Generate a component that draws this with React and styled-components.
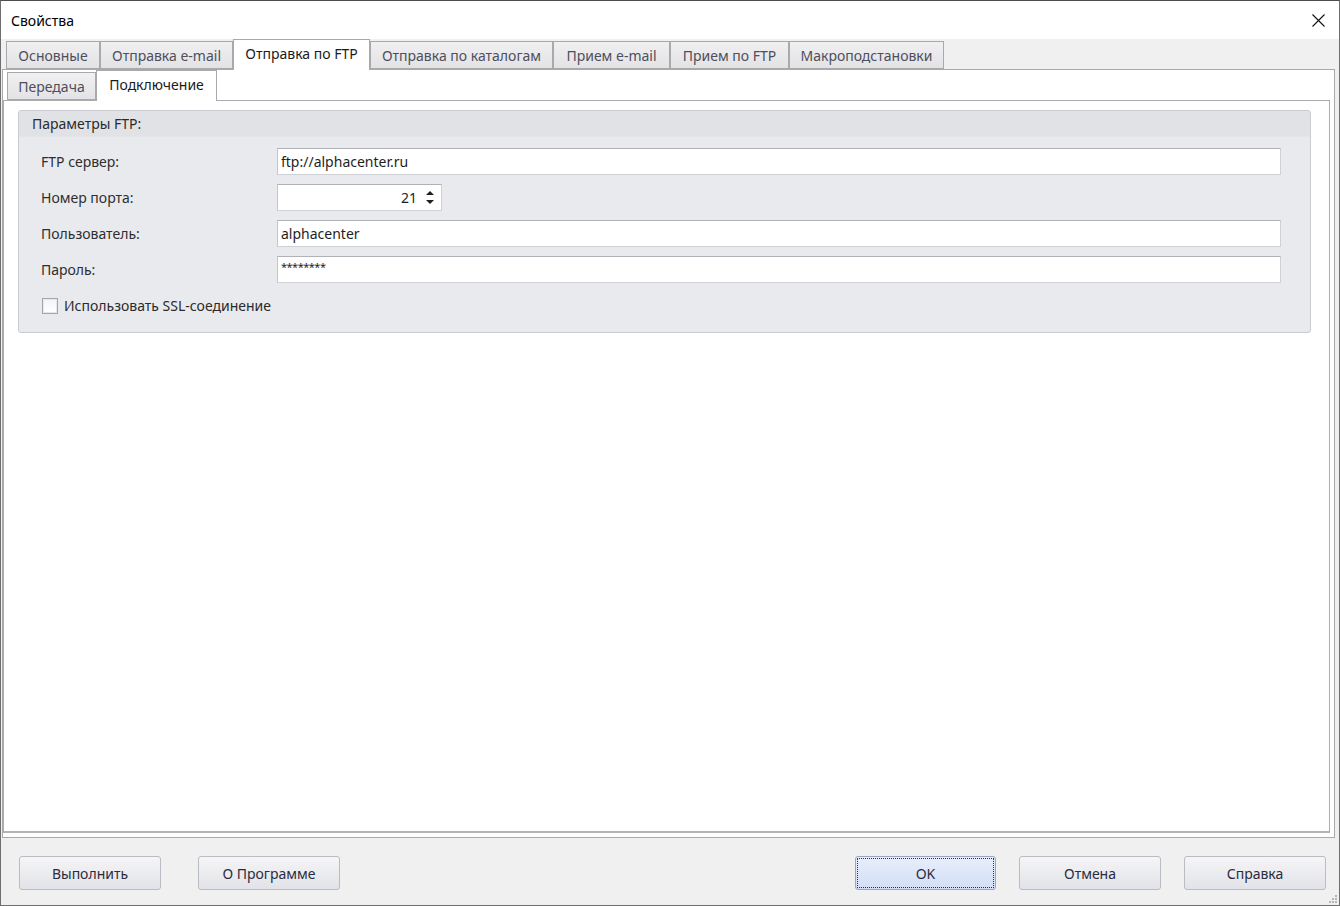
import styled, { createGlobalStyle } from "styled-components";

const GlobalStyle = createGlobalStyle`
  html, body {
    margin: 0;
    padding: 0;
    background: #ffffff;
  }
  * {
    box-sizing: border-box;
  }
`;

const Window = styled.div`
  width: 1340px;
  height: 906px;
  display: flex;
  flex-direction: column;
  border: 1px solid #6e6e6e;
  border-top-color: #4c4c4c;
  background: #f0f0f0;
  font-family: "Noto Sans", "Open Sans", sans-serif;
  font-size: 14px;
  color: #222;
  overflow: hidden;
`;

const TitleBar = styled.div`
  height: 38px;
  flex-shrink: 0;
  display: flex;
  align-items: center;
  justify-content: space-between;
  padding: 0 14px 0 10px;
  background: #ffffff;
  color: #000;
`;

const CloseButton = styled.button`
  width: 14px;
  height: 14px;
  padding: 0;
  border: 0;
  background: none;
  display: flex;
  align-items: center;
  justify-content: center;
`;

const TabStrip = styled.div`
  height: 30px;
  flex-shrink: 0;
  display: flex;
  align-items: flex-end;
  padding-left: ${(p) => p.$indent}px;
`;

const Tab = styled.div`
  position: relative;
  width: ${(p) => p.$width}px;
  height: ${(p) => (p.$active ? 31 : 28)}px;
  margin-bottom: ${(p) => (p.$active ? -1 : 0)}px;
  z-index: ${(p) => (p.$active ? 1 : 0)};
  display: flex;
  align-items: center;
  justify-content: center;
  padding-bottom: ${(p) => (p.$active ? 3 : 0)}px;
  border: 1px solid #a9a9ab;
  border-bottom: ${(p) => (p.$active ? "0" : "1px solid #a9a9ab")};
  background: ${(p) =>
    p.$active ? "#ffffff" : "linear-gradient(#f0f0f1, #e3e3e5)"};
  color: ${(p) => (p.$active ? "#1b1b1b" : "#4e4e5c")};
  white-space: nowrap;
`;

const TabPage = styled.div`
  flex: 1;
  display: flex;
  flex-direction: column;
  margin: 0 4px 0 1px;
  border: 1px solid #a9a9ab;
  background: #ffffff;
  min-height: 0;
`;

const InnerPage = styled.div`
  flex: 1;
  margin: 0 4px 4px 0;
  padding: 9px 18px 0 14px;
  border: 1px solid #acacae;
  border-bottom: 2px solid #b4b4b6;
  background: #ffffff;
`;

const GroupBox = styled.section`
  border: 1px solid #c9cbd0;
  border-radius: 3px;
  background: #e9eaee;
  overflow: hidden;
`;

const GroupHeader = styled.div`
  height: 26px;
  display: flex;
  align-items: center;
  padding-left: 13px;
  background: #e1e2e6;
  border-bottom: 1px solid #e4e5e9;
  color: #2a2a2a;
`;

const FieldGrid = styled.div`
  display: grid;
  grid-template-columns: 236px 1fr;
  row-gap: 9px;
  align-items: center;
  padding: 11px 29px 0 22px;
`;

const Label = styled.label`
  color: #2e2e2e;
`;

const Input = styled.div`
  height: 27px;
  width: ${(p) => (p.$width ? `${p.$width}px` : "100%")};
  display: flex;
  align-items: ${(p) => (p.$masked ? "flex-start" : "center")};
  justify-content: ${(p) => (p.$align === "right" ? "flex-end" : "flex-start")};
  padding: ${(p) => (p.$masked ? "2px 3px 0" : "0 3px")};
  border: 1px solid #d0d1d5;
  border-top-color: #b0b2b7;
  border-left-color: #c4c5ca;
  background: #ffffff;
  color: #1e1e1e;
  font-size: ${(p) => (p.$masked ? "11px" : "14px")};
  letter-spacing: ${(p) => (p.$masked ? "-0.5px" : "0")};
  white-space: nowrap;
`;

const SpinValue = styled.span`
  margin-right: 8px;
`;

const Spinner = styled.div`
  display: flex;
  flex-direction: column;
  gap: 5px;
  align-items: center;
  width: 10px;
  margin-right: 3px;
`;

const CheckRow = styled.div`
  display: flex;
  align-items: center;
  gap: 6px;
  padding: 13px 0 17px 23px;
  color: #2a2a2a;
`;

const CheckBox = styled.span`
  width: 16px;
  height: 16px;
  border: 1px solid #a4a5aa;
  background: linear-gradient(#f4f4f6, #ffffff);
  box-shadow: inset 0 0 0 1px #e8e8ec;
`;

const Footer = styled.div`
  height: 67px;
  flex-shrink: 0;
  display: flex;
  align-items: flex-start;
  padding: 18px 13px 0 18px;
  position: relative;
`;

const ButtonGroup = styled.div`
  display: flex;
  gap: ${(p) => p.$gap}px;
  margin-left: ${(p) => (p.$right ? "auto" : "0")};
`;

const Button = styled.button`
  width: ${(p) => p.$width || 142}px;
  height: 34px;
  border: 1px solid ${(p) => (p.$primary ? "#9aa6bd" : "#b9bcc3")};
  border-radius: 3px;
  background: ${(p) =>
    p.$primary
      ? "linear-gradient(#e7eefc, #d3def6)"
      : "linear-gradient(#f5f5f7, #e2e3e8)"};
  font-family: "Noto Sans", "Open Sans", sans-serif;
  font-size: 14px;
  color: #2b2b3d;
  padding: 0;
  outline: ${(p) => (p.$primary ? "1px dotted #333" : "none")};
  outline-offset: -3px;
`;

const Grip = styled.svg`
  position: absolute;
  right: 1px;
  bottom: 1px;
`;

const tabs = [
  { label: "Основные", width: 94 },
  { label: "Отправка e-mail", width: 133 },
  { label: "Отправка по FTP", width: 137, active: true },
  { label: "Отправка по каталогам", width: 183 },
  { label: "Прием e-mail", width: 117 },
  { label: "Прием по FTP", width: 119 },
  { label: "Макроподстановки", width: 155 },
];

const subTabs = [
  { label: "Передача", width: 89 },
  { label: "Подключение", width: 121, active: true },
];

function Arrow({ up }) {
  return (
    <svg width="8" height="4" viewBox="0 0 8 4">
      <path d={up ? "M0 4 L4 0 L8 4 Z" : "M0 0 L8 0 L4 4 Z"} fill="#1f1f1f" />
    </svg>
  );
}

export default function App() {
  return (
    <>
      <GlobalStyle />
      <Window>
        <TitleBar>
          <span>Свойства</span>
          <CloseButton aria-label="Закрыть">
            <svg width="13" height="13" viewBox="0 0 13 13">
              <path d="M0.5 0.5 L12.5 12.5 M12.5 0.5 L0.5 12.5" stroke="#111" strokeWidth="1.1" />
            </svg>
          </CloseButton>
        </TitleBar>

        <TabStrip $indent={5}>
          {tabs.map((t) => (
            <Tab key={t.label} $width={t.width} $active={t.active}>
              {t.label}
            </Tab>
          ))}
        </TabStrip>

        <TabPage>
          <TabStrip $indent={4}>
            {subTabs.map((t) => (
              <Tab key={t.label} $width={t.width} $active={t.active}>
                {t.label}
              </Tab>
            ))}
          </TabStrip>

          <InnerPage>
            <GroupBox>
              <GroupHeader>Параметры FTP:</GroupHeader>
              <FieldGrid>
                <Label>FTP сервер:</Label>
                <Input>ftp://alphacenter.ru</Input>

                <Label>Номер порта:</Label>
                <Input $width={165} $align="right">
                  <SpinValue>21</SpinValue>
                  <Spinner>
                    <Arrow up />
                    <Arrow />
                  </Spinner>
                </Input>

                <Label>Пользователь:</Label>
                <Input>alphacenter</Input>

                <Label>Пароль:</Label>
                <Input $masked>********</Input>
              </FieldGrid>
              <CheckRow>
                <CheckBox />
                <span>Использовать SSL-соединение</span>
              </CheckRow>
            </GroupBox>
          </InnerPage>
        </TabPage>

        <Footer>
          <ButtonGroup $gap={37}>
            <Button>Выполнить</Button>
            <Button>О Программе</Button>
          </ButtonGroup>
          <ButtonGroup $gap={23} $right>
            <Button $primary $width={141}>OK</Button>
            <Button>Отмена</Button>
            <Button>Справка</Button>
          </ButtonGroup>
          <Grip width="10" height="10" viewBox="0 0 10 10">
            <g fill="#b5b5b5">
              <rect x="7" y="1" width="2" height="2" />
              <rect x="4" y="4" width="2" height="2" />
              <rect x="7" y="4" width="2" height="2" />
              <rect x="1" y="7" width="2" height="2" />
              <rect x="4" y="7" width="2" height="2" />
              <rect x="7" y="7" width="2" height="2" />
            </g>
          </Grip>
        </Footer>
      </Window>
    </>
  );
}
